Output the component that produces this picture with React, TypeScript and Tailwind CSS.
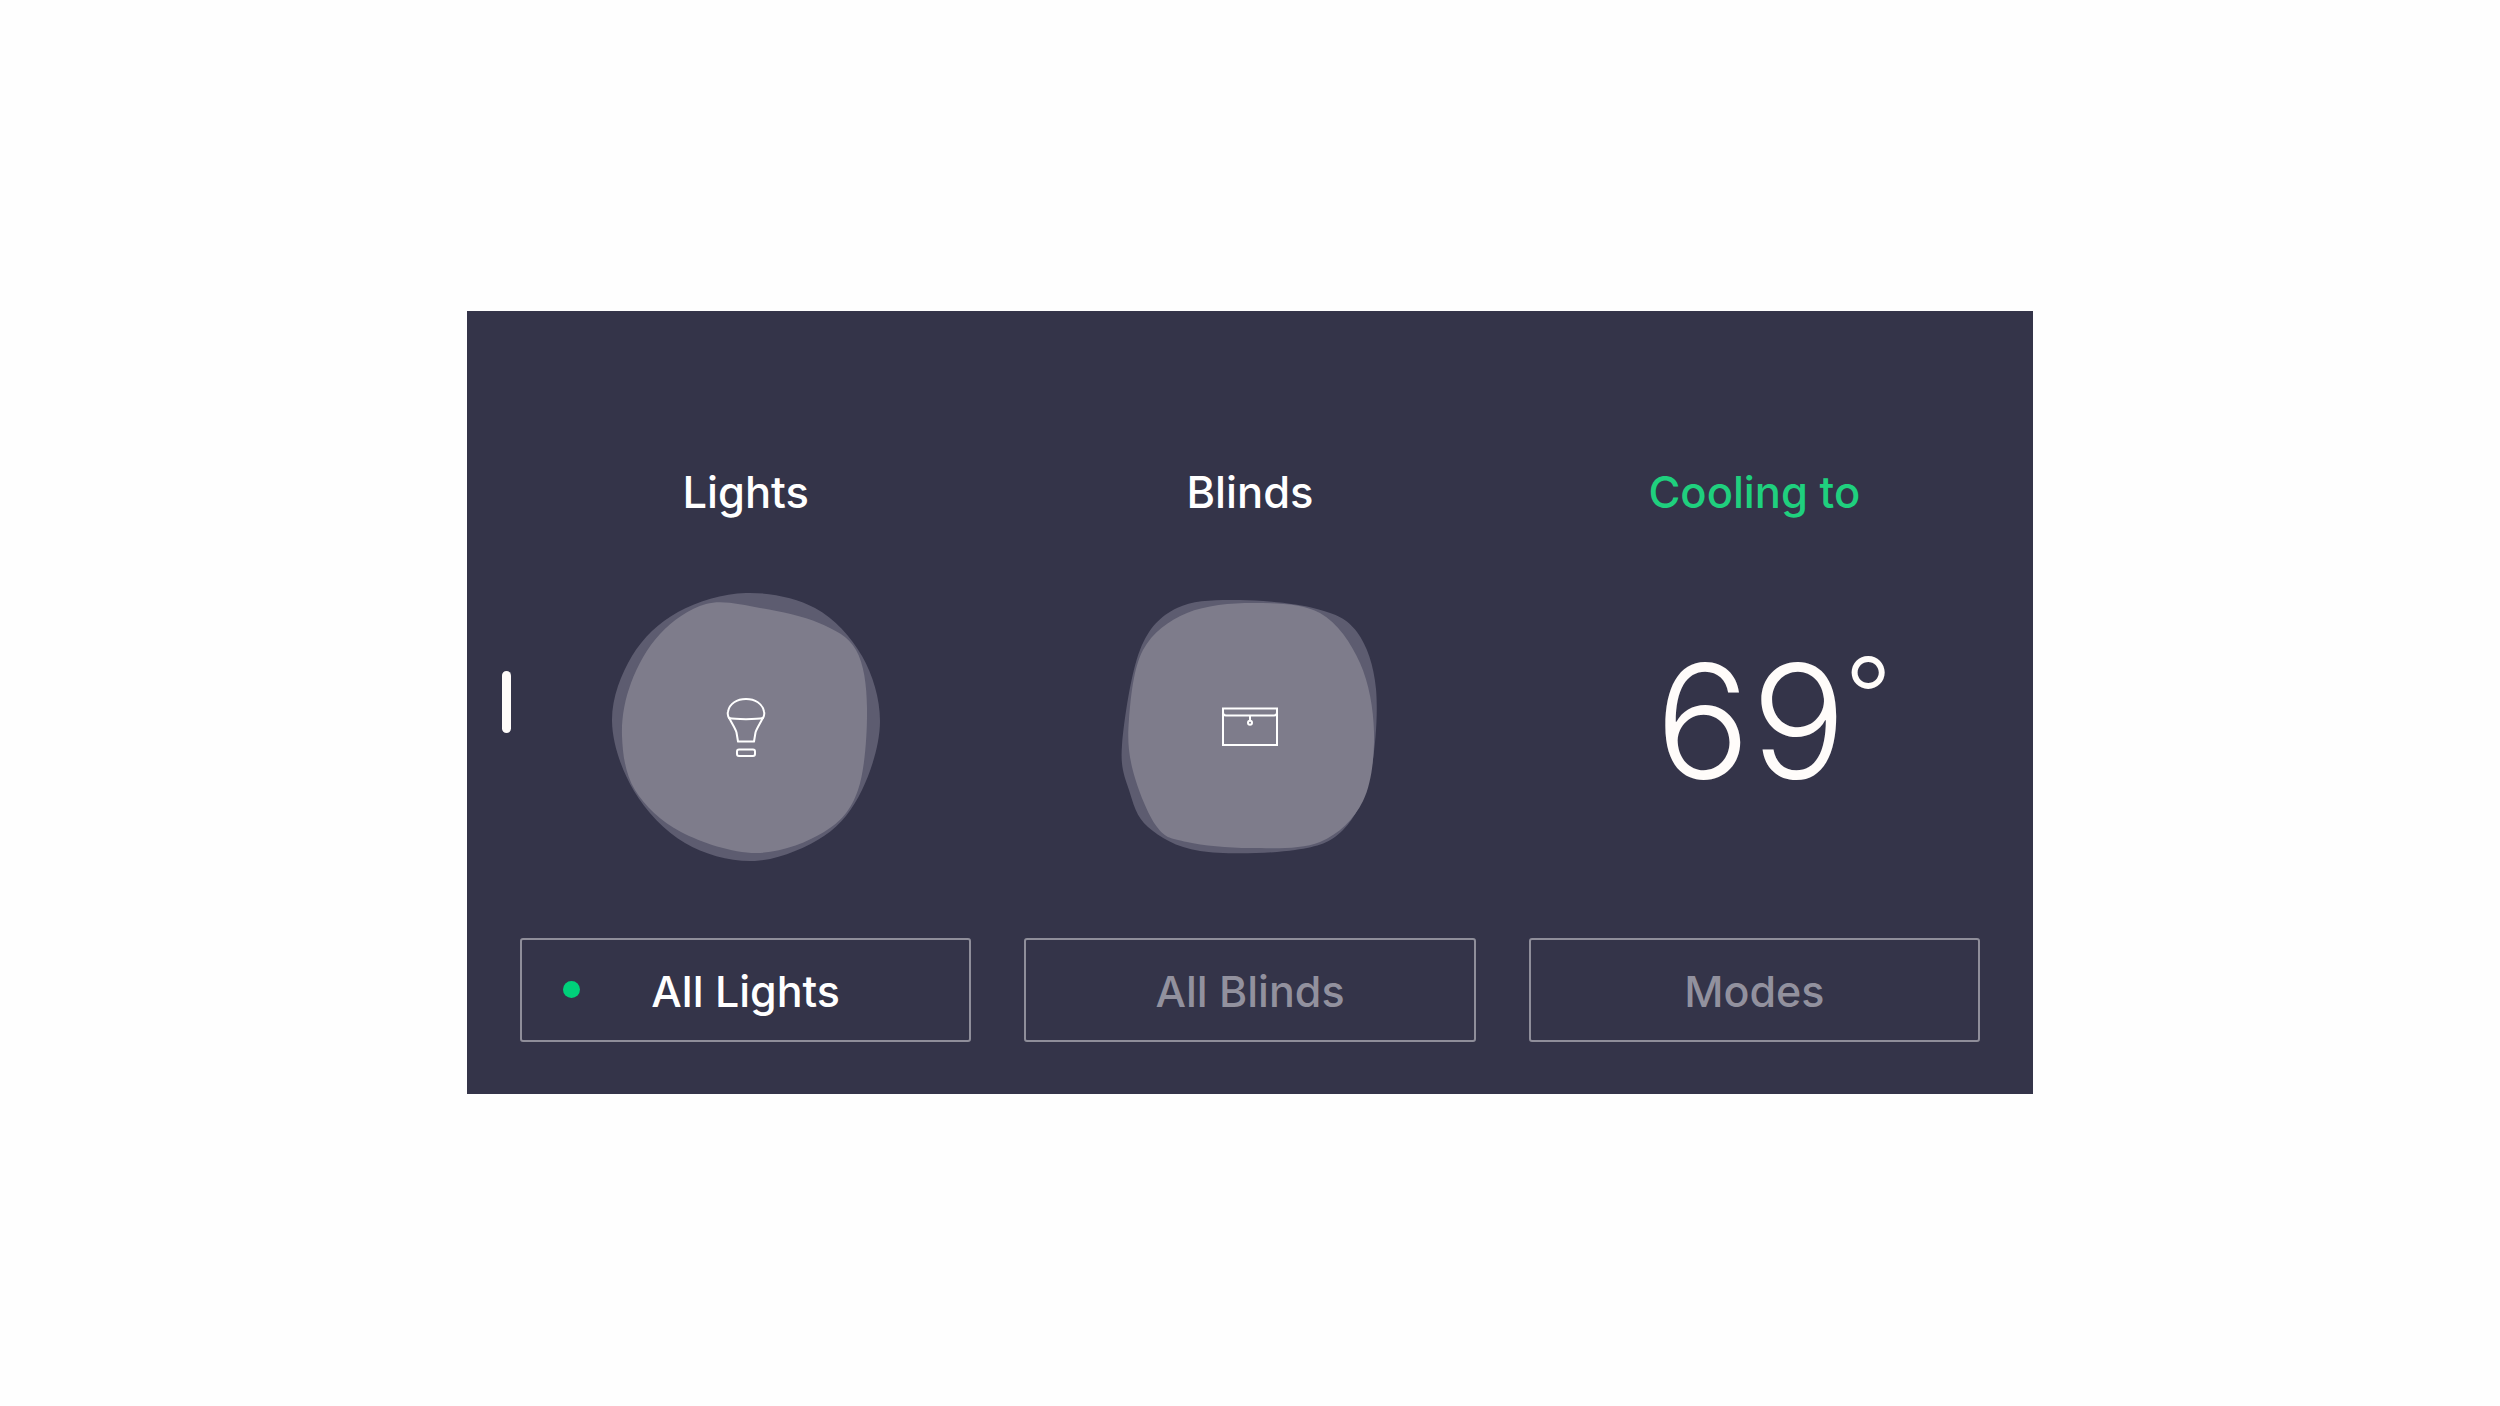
const font = "font-['Inter','Liberation_Sans',sans-serif]";

type Pt = [number, number];

// closed smooth curve through the traced points
function blobPath(pts: Pt[]) {
  const n = pts.length;
  let d = `M${pts[0][0]} ${pts[0][1]}`;
  for (let i = 0; i < n; i++) {
    const p0 = pts[(i - 1 + n) % n];
    const p1 = pts[i];
    const p2 = pts[(i + 1) % n];
    const p3 = pts[(i + 2) % n];
    const c1x = p1[0] + (p2[0] - p0[0]) / 6;
    const c1y = p1[1] + (p2[1] - p0[1]) / 6;
    const c2x = p2[0] - (p3[0] - p1[0]) / 6;
    const c2y = p2[1] - (p3[1] - p1[1]) / 6;
    d += ` C${c1x} ${c1y} ${c2x} ${c2y} ${p2[0]} ${p2[1]}`;
  }
  return d + 'Z';
}

const lightsOuter: Pt[] = [[16, 141], [36, 76], [82, 32], [150, 13], [219, 28], [266, 76], [284, 141], [266, 210], [228, 256], [159, 281], [89, 263], [38, 211]];
const lightsInner: Pt[] = [[26, 156], [35, 103], [64, 54], [110, 24], [164, 28], [223, 43], [260, 70], [271, 128], [262, 210], [228, 252], [160, 273], [85, 252], [39, 210]];
const blindsOuter: Pt[] = [[22, 165], [40, 70], [77, 28], [140, 20], [217, 29], [257, 52], [276, 109], [270, 195], [243, 250], [195, 270], [100, 271], [48, 247], [29, 210]];
const blindsInner: Pt[] = [[29, 139], [43, 70], [87, 33], [153, 23], [220, 33], [260, 83], [274, 152], [263, 221], [220, 262], [150, 268], [87, 262], [57, 247], [33, 191]];

function Blob({ outer, inner, children }: { outer: Pt[]; inner: Pt[]; children: React.ReactNode }) {
  return (
    <svg width="300" height="300" viewBox="0 0 300 300" className="block">
      <path d={blobPath(outer)} fill="#5d5c70" />
      <path d={blobPath(inner)} fill="#7e7c8b" />
      {children}
    </svg>
  );
}

function BulbIcon() {
  return (
    <g transform="translate(104 90.5)" fill="none" stroke="#fff" strokeWidth="2" strokeLinejoin="round" strokeLinecap="round">
      <path d="M30 49C27.5 46 27.5 43 28 41C29.5 33 37 28.5 46 28.5C55 28.5 62.5 33 64 41C64.5 43 64.5 46 62 49C60 53 56.5 58 55.5 62L54 71H38L36.5 62C35.5 58 32 53 30 49Z" />
      <path d="M29 47.5C35 49 57 49 63 47.5" />
      <rect x="37" y="79" width="18" height="6.5" rx="2" />
    </g>
  );
}

function BoxIcon() {
  return (
    <g transform="translate(100 109.5)" fill="none" stroke="#fff" strokeWidth="2">
      <rect x="23" y="19" width="54" height="36.5" />
      <path d="M23 23C23 25.5 24 26 26 26H74C76 26 77 25.5 77 23" />
      <path d="M50 26V31" />
      <circle cx="50" cy="33.3" r="2" />
    </g>
  );
}

function Column({
  label,
  labelClass,
  button,
  active,
  children,
}: {
  label: string;
  labelClass: string;
  button: string;
  active?: boolean;
  children: React.ReactNode;
}) {
  return (
    <div className="flex flex-col items-center">
      <div className={`mt-[151px] h-[60px] leading-[60px] text-[43.5px] font-medium ${labelClass}`}>{label}</div>
      <div className="mt-[58px] flex h-[300px] w-[300px] items-center justify-center">{children}</div>
      <button
        className={`relative mt-[58px] flex h-[104px] w-full items-center justify-center rounded-[3px] border-2 border-[#8f8e9a] pt-[2px] text-[43px] font-medium ${
          active ? 'text-white' : 'text-[#92919e]'
        }`}
      >
        {active && <span className="absolute left-[41px] top-[41px] h-[17px] w-[17px] rounded-full bg-[#00d07a]" />}
        {button}
      </button>
    </div>
  );
}

export default function App() {
  return (
    <div className={`flex min-h-screen items-start justify-center bg-[#fefefe] pt-[311px] ${font}`}>
      <div className="relative grid h-[783px] w-[1566px] grid-cols-3 gap-[53px] bg-[#343449] px-[53px]">
        <span className="absolute left-[35px] top-[360px] h-[62px] w-[9px] rounded-full bg-[#fffcfa]" />

        <Column label="Lights" labelClass="text-white" button="All Lights" active>
          <Blob outer={lightsOuter} inner={lightsInner}>
            <BulbIcon />
          </Blob>
        </Column>

        <Column label="Blinds" labelClass="text-white" button="All Blinds">
          <Blob outer={blindsOuter} inner={blindsInner}>
            <BoxIcon />
          </Blob>
        </Column>

        <Column label="Cooling to" labelClass="text-[#1fd07e]" button="Modes">
          <div className="relative mb-[18px] mr-[6px] text-[158px] leading-none font-[350] tracking-[1px] text-[#fffcfa]">
            69
            <span className="absolute left-[calc(100%-3px)] top-[0px] text-[104px] leading-none">°</span>
          </div>
        </Column>
      </div>
    </div>
  );
}
